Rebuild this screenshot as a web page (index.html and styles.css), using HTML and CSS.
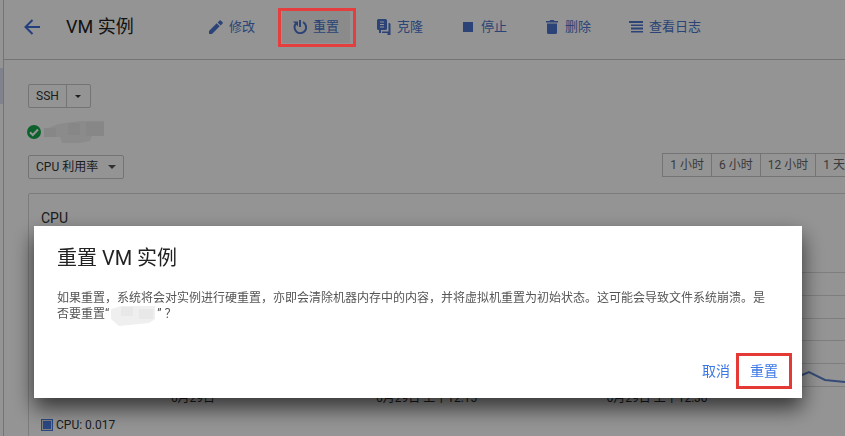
FILE: index.html
```html
<!DOCTYPE html>
<html lang="zh-CN">
<head>
  <meta charset="UTF-8">
  <title>VM 实例</title>
  <link rel="stylesheet" href="styles.css">
</head>
<body>

  <div class="page">
    <nav class="rail"><a class="rail-active" href="#" aria-label="VM 实例"></a></nav>

    <header class="header">
      <a class="back" href="#" aria-label="返回">
        <svg width="16" height="16" viewBox="0 0 16 16"><path d="M16 8H2M8.500 1 1.500 8l7 7" fill="none" stroke="currentColor" stroke-width="2"/></svg>
      </a>
      <h1>VM 实例</h1>
      <div class="toolbar">
        <button class="tool">
          <svg width="14" height="14" viewBox="0 0 14 14"><path d="M0 11v3h3l7.700-7.700-3-3zM13.600 3.400a.8.8 0 0 0 0-1.100L11.700.4a.8.8 0 0 0-1.100 0L8.600 2.400l3 3z"/></svg>修改
        </button>
        <button class="tool active">
          <svg width="14" height="14" viewBox="0 0 14 14"><path d="M6 0h2v7H6z"/><path d="M3.500 3A5.800 5.800 0 1 0 10 2.200" fill="none" stroke="currentColor" stroke-width="2"/><path d="M0 1.500h5v5z"/></svg>重置
        </button>
        <button class="tool">
          <svg width="14" height="16" viewBox="0 0 14 16"><path fill-rule="evenodd" d="M1.500 0h7A1.500 1.500 0 0 1 10 1.500v8A1.500 1.500 0 0 1 8.500 11h-7A1.500 1.500 0 0 1 0 9.500v-8A1.500 1.500 0 0 1 1.500 0zM3 2.500v1h4v-1zM3 5v1h4V5zM3 7.500v1h4v-1z"/><path d="M11.500 4h1l1 1v11h-3v-2H5v-1.500h6.500zM2 11h2v3H2z"/></svg>克隆
        </button>
        <button class="tool">
          <svg width="14" height="14" viewBox="0 0 14 14"><path d="M2 2h10v10H2z"/></svg>停止
        </button>
        <button class="tool">
          <svg width="14" height="14" viewBox="0 0 14 14"><path d="M1 1h3.500l1-1h3l1 1H13v1.500H1zM2 3.500h10v9a1.500 1.500 0 0 1-1.500 1.500h-7A1.500 1.500 0 0 1 2 12.500z"/></svg>删除
        </button>
        <button class="tool">
          <svg width="14" height="14" viewBox="0 0 14 14"><path d="M0 1h14v2H0zM2 4.500h12v1.500H2zM2 7.500h12v2H2zM2 11h12v1.500H2z"/></svg>查看日志
        </button>
      </div>
    </header>

    <main class="content">
      <div class="split">
        <button>SSH</button>
        <button class="split-arrow" aria-label="更多"><span class="caret"></span></button>
      </div>

      <div class="status">
        <svg width="14" height="14" viewBox="0 0 14 14"><circle cx="7" cy="7" r="7" fill="#16a74c"/><path d="M3 7.200l2.800 2.800L11 4.500" fill="none" stroke="#fff" stroke-width="2"/></svg>
        <svg width="64" height="24" viewBox="0 0 64 24"><path d="M2 10l14-6 22-3h24v15H50l-2 5-10 2H20l-2-6H6z" fill="#f0f0f0"/><path d="M2 8h12v9H2zM26 3h12v12H26zM44 2h18v14H44z" fill="#e7e8e7"/></svg>
      </div>

      <div class="filters">
        <div class="metric">
          <select aria-label="指标"><option>CPU 利用率</option></select>
          <span class="caret"></span>
        </div>
        <div class="ranges">
          <button>1 小时</button>
          <button>6 小时</button>
          <button>12 小时</button>
          <button>1 天</button>
        </div>
      </div>

      <section class="card">
        <h2>CPU</h2>
        <svg class="chart" viewBox="0 0 811 136" preserveAspectRatio="xMaxYMin slice">
          <path d="M0 21.500h811M0 44.500h811M0 67.500h811M0 89.500h811M0 112.500h811M0 135.500h811" stroke="#dadada"/>
          <path d="M0 127L120 125 280 128 460 124 620 127 740 130 761 124 768 121 784 129 804 131H811" fill="none" stroke="#5c80cc" stroke-width="2"/>
        </svg>
        <div class="axis">
          <span>6月29日</span>
          <span>6月29日 上午12:15</span>
          <span>6月29日 上午12:30</span>
        </div>
        <div class="legend"><span class="swatch"></span>CPU: 0.017</div>
      </section>
    </main>
  </div>

  <div class="backdrop">
    <div class="dialog" role="dialog" aria-modal="true" aria-labelledby="dialogTitle">
      <h2 id="dialogTitle">重置 VM 实例</h2>
      <p>如果重置，系统将会对实例进行硬重置，亦即会清除机器内存中的内容，并将虚拟机重置为初始状态。这可能会导致文件系统崩溃。是否要重置“<svg class="masked" width="48" height="24" viewBox="0 0 48 24"><path d="M2 6l10-3h34v13l-6 4-30 3-8-7z" fill="#efefef"/><path d="M12 4h12v9H12zM30 6h14v10H30z" fill="#e8e8e8"/></svg>” ？</p>
      <div class="actions">
        <button>取消</button>
        <button class="confirm">重置</button>
      </div>
    </div>
  </div>

  <div class="mark"></div>

</body>
</html>
```
FILE: styles.css
```css
* {
  box-sizing: border-box;
}
body {
  margin: 0;
  overflow: hidden;
  font-family: Roboto, "Noto Sans CJK SC", sans-serif;
  font-size: 12px;
  line-height: 16px;
  color: #333;
}
h1, h2, p {
  margin: 0;
  font-weight: 400;
}
button, select {
  margin: 0;
  padding: 0;
  border: 0;
  background: none;
  font: inherit;
  color: inherit;
}
svg {
  flex: none;
  fill: currentColor;
}
.page {
  display: grid;
  grid-template-columns: 4px 1fr;
  grid-template-rows: 60px 1fr;
  height: 100vh;
  overflow: hidden;
}

/* edge of the side menu */
.rail {
  grid-row: 1 / 3;
  border-right: 1px solid #c8c8cc;
  padding-top: 68px;
}
.rail-active {
  display: block;
  height: 36px;
  background: #dce2f5;
}

.header {
  display: flex;
  align-items: center;
  padding: 0 0 6px 20px;
  border-bottom: 1px solid #c8c8c8;
}
.back {
  display: flex;
  color: #3d6fd8;
}
.header h1 {
  width: 132px;
  margin-left: 26px;
  font-size: 18px;
  line-height: 24px;
  color: #222;
}
.toolbar {
  display: flex;
  gap: 16px;
}
.tool {
  display: flex;
  align-items: center;
  gap: 6px;
  height: 32px;
  padding: 0 11px;
  font-size: 13px;
  color: #4a74cc;
  white-space: nowrap;
}
.tool.active {
  background: #efefef;
}

.content {
  min-width: 0;
  margin-right: -8px;
  padding: 24px 0 0 24px;
}
.split {
  display: flex;
  width: fit-content;
  height: 24px;
  border: 1px solid #c8c8c8;
  border-radius: 2px;
}
.split button {
  padding: 0 7px;
}
.split .split-arrow {
  width: 24px;
  border-left: 1px solid #c8c8c8;
}
.caret {
  display: inline-block;
  border: 4px solid transparent;
  border-top-color: currentColor;
  border-bottom: 0;
}
.split .caret {
  border-width: 3px 3px 0;
  vertical-align: middle;
}
.status {
  display: flex;
  align-items: center;
  gap: 1px;
  height: 24px;
  margin: 12px 0 0 -1px;
}
.filters {
  display: flex;
  justify-content: space-between;
  margin-top: 11px;
}
.metric {
  position: relative;
}
.metric select {
  width: 96px;
  height: 24px;
  padding: 0 7px;
  border: 1px solid #c8c8c8;
  border-radius: 2px;
  appearance: none;
}
.metric .caret {
  position: absolute;
  top: 10px;
  right: 8px;
  color: #555;
  pointer-events: none;
}
.ranges {
  display: flex;
  height: 24px;
  margin-top: -2px;
  border: 1px solid #c8c8c8;
  color: #666;
}
.ranges button {
  padding: 0 7px;
  white-space: nowrap;
}
.ranges button + button {
  border-left: 1px solid #c8c8c8;
}

.card {
  margin-top: 14px;
  padding: 12px 0 12px 12px;
  border: 1px solid #d6d6d6;
  border-radius: 2px;
}
.card h2 {
  font-size: 14px;
  line-height: 24px;
}
.chart {
  display: block;
  width: 100%;
  height: 136px;
  margin-top: 21px;
}
.axis {
  display: grid;
  grid-template-columns: 304px 166px 304px;
  justify-content: start;
  padding-top: 3px;
  text-align: center;
}
.axis span:nth-child(2) {
  text-align: left;
  padding-left: 31px;
  white-space: nowrap;
}
.axis span:nth-child(3) {
  padding-right: 12px;
}
.legend {
  display: flex;
  align-items: center;
  gap: 3px;
  margin-top: 11px;
}
.swatch {
  width: 12px;
  height: 12px;
  border: 1px solid #4a7be0;
  background: #4a7be0;
  box-shadow: inset 0 0 0 1px #ddd;
}

.backdrop {
  position: fixed;
  inset: 0;
  padding: 226px 43px 0 34px;
  background: rgba(0, 0, 0, 0.42);
}
.dialog {
  padding: 20px 28px 9px 23px;
  background: #fff;
  box-shadow: 0 10px 20px rgba(0, 0, 0, 0.65);
}
.dialog h2 {
  font-size: 20px;
  line-height: 24px;
  color: #222;
}
.dialog p {
  margin-top: 20px;
  color: #555;
}
.masked {
  margin: -8px 0;
  vertical-align: middle;
}
.actions {
  display: flex;
  justify-content: flex-end;
  gap: 6px;
  margin: 31px -18px 0 0;
}
.actions button {
  height: 36px;
  font-size: 14px;
  color: #3b78e7;
}
.actions .confirm {
  width: 56px;
  border: 3px solid #e53935;
}

/* highlight around the reset tool */
.mark {
  position: absolute;
  top: 8px;
  left: 278px;
  width: 78px;
  height: 39px;
  border: 3px solid #e53e3e;
}
```
